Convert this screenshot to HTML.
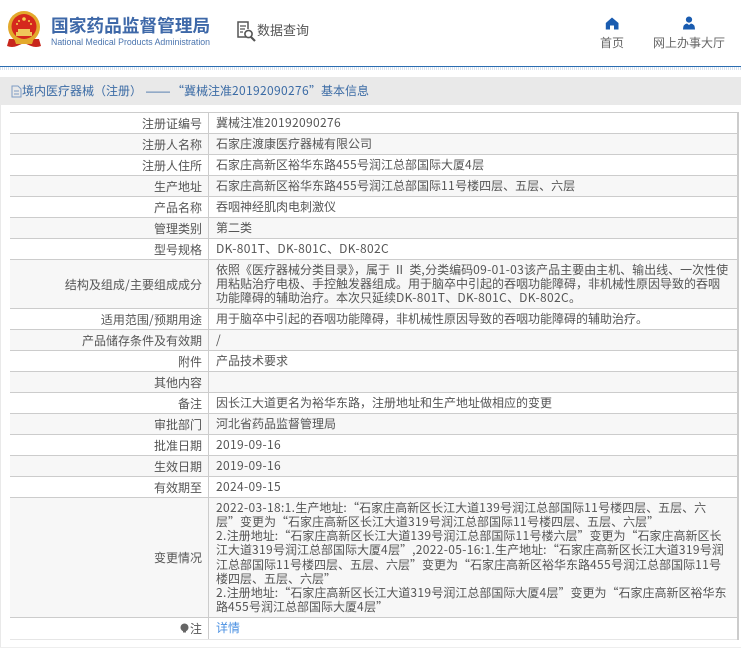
<!DOCTYPE html>
<html lang="zh"><head><meta charset="utf-8">
<style>
html,body{margin:0;padding:0;background:#fff}
body{width:741px;height:648px;position:relative;overflow:hidden;font-family:"Noto Sans CJK SC","Liberation Sans",sans-serif;color:#555;font-size:12px}
.a{position:absolute;white-space:nowrap}
i{font-style:normal;letter-spacing:.34px}
.row{position:absolute;left:10px;width:728px;border-top:1px solid #ccc;box-sizing:border-box}
.row.e{background:#f7f7f7}
.l{position:absolute;left:0;width:192px;text-align:right;top:0;bottom:0;display:flex;align-items:center;justify-content:flex-end;font-size:12px;color:#555}
.v{position:absolute;left:206px;right:4px;top:0;bottom:0;display:flex;align-items:center;line-height:14.2px;font-size:12px;color:#555;white-space:nowrap}
.v span{display:block;width:100%}
#vl{position:absolute;left:208px;top:113px;width:1px;height:526px;background:#ccc}
</style></head><body>
<svg class="a" style="left:7px;top:11px" width="34" height="37" viewBox="0 0 34 37">
<path d="M2 28 L0 35 Q5 37 10 35 L17 32 L24 35 Q29 37 34 35 L32 28Z" fill="#c8261c"/>
<circle cx="17" cy="16" r="16" fill="#e3a92c"/>
<circle cx="17" cy="15.5" r="12.5" fill="#d5281d"/>
<path d="M7 27 Q17 33 27 27 L25 33 H9Z" fill="#e3a92c"/>
<path d="M9 21 H25 V25 H9Z M11 18 H23 V21 H11Z" fill="#efc75a"/>
<circle cx="17" cy="8" r="1.8" fill="#f5d04e"/><circle cx="12" cy="10" r="1" fill="#f5d04e"/><circle cx="22" cy="10" r="1" fill="#f5d04e"/><circle cx="10" cy="13" r="1" fill="#f5d04e"/><circle cx="24" cy="13" r="1" fill="#f5d04e"/>
</svg>
<div class="a" style="left:51px;top:14px;font-size:17.7px;line-height:22px;font-weight:bold;color:#3e68a8">国家药品监督管理局</div>
<div class="a" style="left:51px;top:36px;font-family:'Liberation Sans',sans-serif;font-size:8.75px;line-height:12px;color:#4a74ae">National Medical Products Administration</div>
<svg class="a" style="left:236px;top:21px" width="22" height="21" viewBox="0 0 22 21" fill="none" stroke="#555">
<path d="M10 16H2V1H12V8" stroke-width="1.5"/>
<path d="M4 5H10M4 8H9M4 11H7" stroke-width="1.2"/>
<circle cx="12.5" cy="13" r="3.6" stroke-width="1.6"/>
<path d="M15 16L19 20" stroke-width="2.2"/>
</svg>
<div class="a" style="left:257px;top:20px;font-size:13px;line-height:20px;color:#555">数据查询</div>
<svg class="a" style="left:605px;top:17px" width="14" height="13" viewBox="0 0 14 13"><path d="M7 0.5L13.5 6V12.5H9V8.5H5V12.5H0.8V6Z" fill="#1a5cb0"/></svg>
<svg class="a" style="left:682px;top:16px" width="14" height="14" viewBox="0 0 14 14"><circle cx="7" cy="3.6" r="3.1" fill="#1a5cb0"/><path d="M1 13.5Q1 8 5 7.5L7 9L9 7.5Q13 8 13 13.5Z" fill="#1a5cb0"/></svg>
<div class="a" style="left:600px;top:35px;font-size:12px;line-height:16px;color:#666">首页</div>
<div class="a" style="left:653px;top:35px;font-size:12px;line-height:16px;color:#666">网上办事大厅</div>
<div class="a" style="left:0;top:66px;width:741px;height:1px;background:#2a6cb0"></div>
<div class="a" style="left:0;top:67px;width:741px;height:3px;background:repeating-linear-gradient(90deg,#d8e2ee 0 1px,#fff 1px 2px)"></div>
<div class="a" style="left:0;top:77px;width:741px;height:28px;background:#e9e9e9"></div>
<div class="a" style="left:0;top:105px;width:1px;height:543px;background:#e9e9e9"></div>
<div class="a" style="left:0;top:647px;width:741px;height:1px;background:#eee"></div>
<svg class="a" style="left:11px;top:85px" width="11" height="13" viewBox="0 0 11 13" fill="none" stroke="#7d9cc4"><path d="M1 1H7L10 4V12H1Z"/><path d="M3 6H8M3 9H8"/></svg>
<div class="a" style="left:22px;top:83px;font-size:12px;line-height:16px;color:#3b6ba5">境内医疗器械（注册）</div>
<div class="a" style="left:146px;top:83px;font-family:'Liberation Sans',sans-serif;font-size:12px;line-height:16px;color:#3b6ba5">——</div>
<div class="a" style="left:172px;top:83px;font-size:12px;line-height:16px;color:#3b6ba5">“冀械注准<i>20192090276</i>”基本信息</div>
<div class="row" style="top:112px;height:21px"><div class="l">注册证编号</div><div class="v"><span>冀械注准<i>20192090276</i></span></div></div>
<div class="row e" style="top:133px;height:21px"><div class="l">注册人名称</div><div class="v"><span>石家庄渡康医疗器械有限公司</span></div></div>
<div class="row" style="top:154px;height:21px"><div class="l">注册人住所</div><div class="v"><span>石家庄高新区裕华东路<i>455</i>号润江总部国际大厦<i>4</i>层</span></div></div>
<div class="row e" style="top:175px;height:21px"><div class="l">生产地址</div><div class="v"><span>石家庄高新区裕华东路<i>455</i>号润江总部国际<i>11</i>号楼四层、五层、六层</span></div></div>
<div class="row" style="top:196px;height:21px"><div class="l">产品名称</div><div class="v"><span>吞咽神经肌肉电刺激仪</span></div></div>
<div class="row e" style="top:217px;height:21px"><div class="l">管理类别</div><div class="v"><span>第二类</span></div></div>
<div class="row" style="top:238px;height:21px"><div class="l">型号规格</div><div class="v"><span><i>DK-801T</i>、<i>DK-801C</i>、<i>DK-802C</i></span></div></div>
<div class="row e" style="top:259px;height:49px"><div class="l">结构及组成<i>/</i>主要组成成分</div><div class="v"><span>依照《医疗器械分类目录》，属于<i style="margin:0 3.5px">Ⅱ</i>类<i>,</i>分类编码<i>09-01-03</i>该产品主要由主机、输出线、一次性使<br>用粘贴治疗电极、手控触发器组成。用于脑卒中引起的吞咽功能障碍，非机械性原因导致的吞咽<br>功能障碍的辅助治疗。本次只延续<i>DK-801T</i>、<i>DK-801C</i>、<i>DK-802C</i>。</span></div></div>
<div class="row" style="top:308px;height:21px"><div class="l">适用范围<i>/</i>预期用途</div><div class="v"><span>用于脑卒中引起的吞咽功能障碍，非机械性原因导致的吞咽功能障碍的辅助治疗。</span></div></div>
<div class="row e" style="top:329px;height:21px"><div class="l">产品储存条件及有效期</div><div class="v"><span><i>/</i></span></div></div>
<div class="row" style="top:350px;height:21px"><div class="l">附件</div><div class="v"><span>产品技术要求</span></div></div>
<div class="row e" style="top:371px;height:21px"><div class="l">其他内容</div><div class="v"><span></span></div></div>
<div class="row" style="top:392px;height:21px"><div class="l">备注</div><div class="v"><span>因长江大道更名为裕华东路，注册地址和生产地址做相应的变更</span></div></div>
<div class="row e" style="top:413px;height:21px"><div class="l">审批部门</div><div class="v"><span>河北省药品监督管理局</span></div></div>
<div class="row" style="top:434px;height:21px"><div class="l">批准日期</div><div class="v"><span><i>2019-09-16</i></span></div></div>
<div class="row e" style="top:455px;height:21px"><div class="l">生效日期</div><div class="v"><span><i>2019-09-16</i></span></div></div>
<div class="row" style="top:476px;height:21px"><div class="l">有效期至</div><div class="v"><span><i>2024-09-15</i></span></div></div>
<div class="row e" style="top:497px;height:120px"><div class="l">变更情况</div><div class="v"><span><i>2022-03-18:1.</i>生产地址<i>:</i>“石家庄高新区长江大道<i>139</i>号润江总部国际<i>11</i>号楼四层、五层、六<br>层”变更为“石家庄高新区长江大道<i>319</i>号润江总部国际<i>11</i>号楼四层、五层、六层”<br><i>2.</i>注册地址<i>:</i>“石家庄高新区长江大道<i>139</i>号润江总部国际<i>11</i>号楼六层”变更为“石家庄高新区长<br>江大道<i>319</i>号润江总部国际大厦<i>4</i>层”<i>,2022-05-16:1.</i>生产地址<i>:</i>“石家庄高新区长江大道<i>319</i>号润<br>江总部国际<i>11</i>号楼四层、五层、六层”变更为“石家庄高新区裕华东路<i>455</i>号润江总部国际<i>11</i>号<br>楼四层、五层、六层”<br><i>2.</i>注册地址<i>:</i>“石家庄高新区长江大道<i>319</i>号润江总部国际大厦<i>4</i>层”变更为“石家庄高新区裕华东<br>路<i>455</i>号润江总部国际大厦<i>4</i>层”</span></div></div>
<div class="row" style="top:617px;height:23px;border-bottom:1px solid #e6e6e6"><div class="l"><svg width="9" height="11" viewBox="0 0 9 11" style="margin-right:1px"><path d="M4.5 0.5A4 4 0 0 1 6 8.2V9.5H3V8.2A4 4 0 0 1 4.5 0.5Z" fill="#666"/></svg>注</div><div class="v" style="color:#4a90e2"><span>详情</span></div></div>
<div id="vl"></div>
<div class="a" style="left:737px;top:112px;width:2px;height:528px;background:#ccc"></div>
</body></html>
